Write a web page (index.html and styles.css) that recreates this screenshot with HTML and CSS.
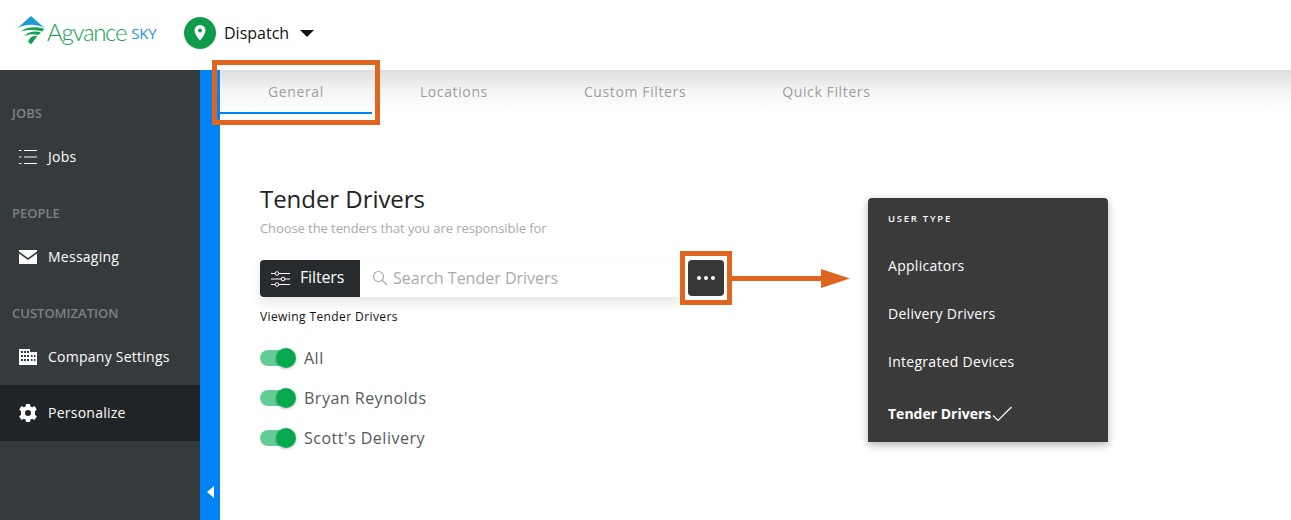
FILE: index.html
```html
<!DOCTYPE html>
<html lang="en">
<head>
<meta charset="utf-8">
<title>Agvance SKY Dispatch</title>
<link rel="stylesheet" href="styles.css">
</head>
<body>
<header class="topbar">
  <div class="logo">
    <svg class="logo-mark" width="28" height="30" viewBox="0 0 28 30">
      <path d="M0 12.500 L14 0 L28 12.500 C20 7.500 8 7.500 0 12.500Z" fill="#1b9ad6"/>
      <path d="M3 15.500 C10 10.500 20 10 27.500 13 L25 15.500 C18 13.500 10 13.500 3 15.500Z" fill="#12a150"/>
      <path d="M7 20 C12 15.500 18 14.500 24 16.500 L21.500 19 C17 17.500 12 18 7 20Z" fill="#12a150"/>
      <path d="M11 25.500 C12.500 21.500 16 19.500 20.500 19.800 L14 28.500Z" fill="#12a150"/>
    </svg>
    <span class="logo-name">Agvance</span>
    <span class="logo-sky">SKY</span>
  </div>
  <div class="app-switch">
    <span class="app-badge">
      <svg width="12" height="16" viewBox="0 0 12 16"><path fill-rule="evenodd" d="M6 0a5.500 5.500 0 0 1 5.500 5.500C11.500 9.500 6 15.500 6 15.500S.5 9.500.5 5.500A5.500 5.500 0 0 1 6 0Zm0 3.500a2 2 0 1 0 0 4 2 2 0 0 0 0-4Z" fill="#fff"/></svg>
    </span>
    <span class="app-name">Dispatch</span>
    <span class="caret"></span>
  </div>
</header>
<div class="shell">
  <nav class="sidebar">
    <div class="nav-label">JOBS</div>
    <a class="nav-item">
      <svg class="nav-icon" width="18" height="16" viewBox="0 0 18 16"><path d="M0 1.500h2.500M5 1.500h13M0 8h2.500M5 8h13M0 14.500h2.500M5 14.500h13" stroke="#fff" stroke-width="1" fill="none"/></svg>
      <span class="nav-text">Jobs</span>
    </a>
    <div class="nav-label">PEOPLE</div>
    <a class="nav-item">
      <svg class="nav-icon" width="18" height="14" viewBox="0 0 18 14"><path d="M0 0h18v1.500L9 8 0 1.500Z M0 3.500 9 10l9-6.500V14H0Z" fill="#fff"/></svg>
      <span class="nav-text">Messaging</span>
    </a>
    <div class="nav-label">CUSTOMIZATION</div>
    <a class="nav-item">
      <svg class="nav-icon" width="18" height="16" viewBox="0 0 18 16"><path fill-rule="evenodd" d="M0 0h11v3h7v13H0ZM2 2v2h2V2Zm3 0v2h2V2Zm3 0v2h2V2ZM2 6v2h2V6Zm3 0v2h2V6Zm3 0v2h2V6Zm4 0v2h1.500V6Zm3 0v2h1.500V6ZM2 10v2h2v-2Zm3 0v2h2v-2Zm3 0v2h2v-2Zm4 0v2h1.500v-2Zm3 0v2h1.500v-2Z" fill="#fff"/></svg>
      <span class="nav-text">Company Settings</span>
    </a>
    <a class="nav-item active">
      <svg class="nav-icon" width="18" height="18" viewBox="0 0 18 18"><path fill-rule="evenodd" d="M7 0h4l.5 2.400 1.700.8L15.500 2l2.300 3.500-1.800 1.700v3.600l1.800 1.700-2.300 3.500-2.300-1.200-1.700.8L11 18H7l-.5-2.400-1.700-.8L2.500 16 .2 12.500 2 10.800V7.200L.2 5.500 2.500 2l2.300 1.200 1.700-.8ZM9 6a3 3 0 1 0 0 6 3 3 0 0 0 0-6Z" fill="#fff"/></svg>
      <span class="nav-text">Personalize</span>
    </a>
  </nav>
  <div class="rail"><span class="rail-arrow"></span></div>
  <main class="main">
    <div class="tabs">
      <div class="tab selected">General</div>
      <div class="tab">Locations</div>
      <div class="tab">Custom Filters</div>
      <div class="tab">Quick Filters</div>
    </div>
    <section class="panel">
      <h1 class="title">Tender Drivers</h1>
      <p class="subtitle">Choose the tenders that you are responsible for</p>
      <div class="search-row">
        <div class="search">
          <button class="filters-btn">
            <svg width="19" height="16" viewBox="0 0 19 16"><g stroke="#fff" stroke-width="1" fill="#272b2e"><path d="M0 2.500h19M0 8h19M0 13.500h19"/><circle cx="6" cy="2.500" r="1.800"/><circle cx="12" cy="8" r="1.800"/><circle cx="6" cy="13.500" r="1.800"/></g></svg>
            Filters
          </button>
          <div class="search-field">
            <svg width="16" height="16" viewBox="0 0 16 16"><circle cx="6.500" cy="6.500" r="5" fill="none" stroke="#aaa" stroke-width="1.100"/><path d="M10 10l5 5" stroke="#aaa" stroke-width="1.300"/></svg>
            <span>Search Tender Drivers</span>
          </div>
        </div>
        <button class="more-btn"><i></i><i></i><i></i></button>
      </div>
      <div class="viewing">Viewing Tender Drivers</div>
      <ul class="toggles">
        <li class="toggle-row"><span class="switch"></span>All</li>
        <li class="toggle-row"><span class="switch"></span>Bryan Reynolds</li>
        <li class="toggle-row"><span class="switch"></span>Scott's Delivery</li>
      </ul>
    </section>
  </main>
</div>

<div class="menu">
  <div class="menu-head">USER TYPE</div>
  <div class="menu-item">Applicators</div>
  <div class="menu-item">Delivery Drivers</div>
  <div class="menu-item">Integrated Devices</div>
  <div class="menu-item current">Tender Drivers
    <svg width="20" height="16" viewBox="0 0 20 16"><path d="M1 9.500l5 5L19.500 1" fill="none" stroke="#fff" stroke-width="1.200"/></svg>
  </div>
</div>

<div class="mark mark-tab"></div>
<div class="mark mark-more"></div>
<svg class="callout-arrow" width="118" height="20" viewBox="0 0 118 20"><path d="M0 7h89V0l29 9.500-29 9.500v-7H0Z" fill="#e0651f"/></svg>
</body>
</html>
```

FILE: styles.css
```css
* { box-sizing: border-box; }
html, body { margin: 0; height: 520px; overflow: hidden; background: #fff; }
body { font-family: "Open Sans", "Liberation Sans", sans-serif; color: #222; position: relative; }

.topbar { height: 70px; display: flex; align-items: center; background: #fff; }
.logo { width: 184px; height: 70px; padding: 0 0 8px 17px; display: flex; align-items: center; }
.logo-mark { flex: none; }
.logo-name { margin-left: 2px; font-size: 24px; font-weight: 300; letter-spacing: -1.300px; color: #12a150; font-family: "Lato", sans-serif; }
.logo-sky { margin-left: 5px; font-size: 15px; font-weight: 500; color: #1a95d8; letter-spacing: -0.1px; margin-top: 3px; }
.app-switch { display: flex; align-items: center; margin-bottom: 4px; }
.app-badge { width: 32px; height: 32px; border-radius: 50%; background: #0f9b4a; display: flex; align-items: center; justify-content: center; }
.app-name { margin-left: 8px; font-size: 16px; color: #111; }
.caret { margin-left: 11px; width: 0; height: 0; border-left: 7px solid transparent; border-right: 7px solid transparent; border-top: 7px solid #111; }

.shell { display: flex; height: 450px; }
.sidebar { width: 200px; background: #353a3d; padding-top: 15px; flex: none; }
.nav-label { height: 44px; padding: 19px 0 0 12px; font-size: 13px; font-weight: 600; line-height: 18px; color: #7d8285; }
.nav-item { height: 56px; display: flex; align-items: center; color: #fff; font-size: 14px; letter-spacing: 0.25px; padding-left: 19px; gap: 11px; }
.nav-text { margin-bottom: 2px; }
.nav-item.active { background: #202426; }
.nav-icon { flex: none; }
.rail { width: 20px; background: #0084f4; flex: none; display: flex; align-items: flex-end; padding: 0 0 22px 7px; }
.rail-arrow { width: 0; height: 0; border-top: 6px solid transparent; border-bottom: 6px solid transparent; border-right: 7px solid #fff; }

.main { flex: 1; }
.tabs { display: flex; height: 44px; background: linear-gradient(#dedede, #f6f6f6 50%, #fff 100%); }
.tab { padding: 0 48px; font-size: 14px; font-weight: 500; line-height: 43px; letter-spacing: 0.62px; color: #9d9d9d; height: 44px; }
.tab.selected { border-bottom: 2px solid #0084f4; }

.panel { padding: 68px 0 0 40px; }
.title { margin: 0; font-size: 24px; font-weight: 500; line-height: 34px; letter-spacing: -0.05px; color: #222; }
.subtitle { margin: 0; font-size: 13px; line-height: 24px; letter-spacing: -0.08px; color: #aaa; }
.search-row { display: flex; margin-top: 20px; }
.search { width: 420px; height: 37px; display: flex; border-radius: 4px 0 0 4px; background: #fff; box-shadow: 0 6px 12px rgba(0, 0, 0, 0.1); }
.filters-btn { width: 100px; height: 37px; border: 0; border-radius: 4px 0 0 4px; background: #272b2e; color: #fff; font: 16px "Open Sans", sans-serif; letter-spacing: -0.15px; display: flex; align-items: center; gap: 10px; padding: 0 0 3px 11px; }
.filters-btn svg { margin-top: 3px; }
.search-field { flex: 1; display: flex; align-items: center; gap: 5px; padding: 0 0 2px 12px; font-size: 16px; color: #aaa; }
.more-btn { margin-left: 8px; width: 36px; height: 36px; border: 0; border-radius: 4px; background: #383838; display: flex; align-items: center; justify-content: center; gap: 3px; padding: 0; }
.more-btn i { width: 4px; height: 4px; border-radius: 50%; background: #fff; }
.viewing { margin-top: 11px; font-size: 12px; line-height: 18px; letter-spacing: 0.4px; color: #111; }
.toggles { list-style: none; margin: 12px 0 0; padding: 0; }
.toggle-row { height: 40px; display: flex; align-items: center; font-size: 16px; letter-spacing: 0.5px; color: #55595c; }
.switch { position: relative; width: 32px; height: 16px; border-radius: 8px; background: #66cc96; margin-right: 12px; }
.switch::after { content: ""; position: absolute; right: -4px; top: -2px; width: 20px; height: 20px; border-radius: 50%; background: #06a94d; box-shadow: 0 1px 3px rgba(0, 0, 0, 0.25); }

.menu { position: absolute; left: 868px; top: 198px; width: 240px; height: 244px; padding: 13px 20px 0; background: #3a3a3a; border-radius: 4px 4px 0 0; box-shadow: 0 3px 8px rgba(0, 0, 0, 0.3); color: #fff; }
.menu-head { font-size: 9.500px; font-weight: 600; line-height: 16px; letter-spacing: 1.750px; }
.menu-item { height: 48px; line-height: 48px; font-size: 14px; letter-spacing: 0.28px; }
.menu-item:nth-child(2) { margin-top: 15px; }
.menu-item.current { margin-top: 4px; font-weight: 700; letter-spacing: 0; display: flex; align-items: center; gap: 1px; }

.mark { position: absolute; border: 5px solid #e0651f; }
.mark-tab { left: 212px; top: 60px; width: 168px; height: 65px; }
.mark-more { left: 680px; top: 251px; width: 52px; height: 54px; }
.callout-arrow { position: absolute; left: 732px; top: 269px; }
```
